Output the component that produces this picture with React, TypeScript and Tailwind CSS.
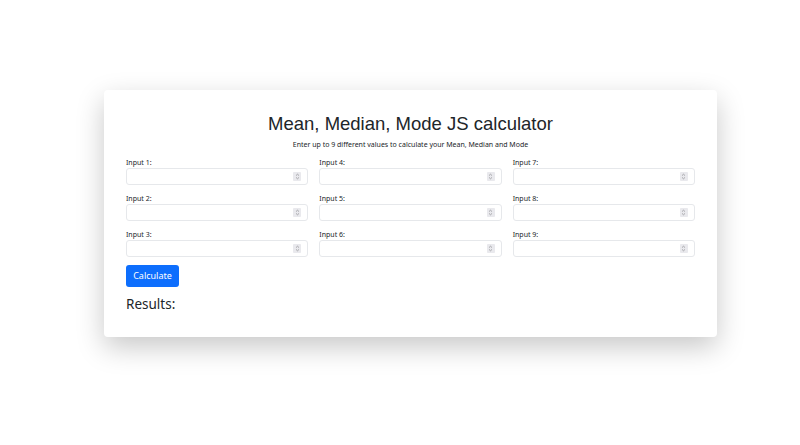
const inputs = [1, 2, 3, 4, 5, 6, 7, 8, 9]

function Spinner() {
  return (
    <span className="flex h-[9px] w-[8px] flex-col items-center justify-center rounded-[1px] bg-[#e9e9ed]">
      <svg width="5" height="7" viewBox="0 0 5 7" fill="none" stroke="#8a8a8e" strokeWidth="0.7">
        <path d="M1 2.6 L2.5 1.2 L4 2.6" />
        <path d="M1 4.4 L2.5 5.8 L4 4.4" />
      </svg>
    </span>
  )
}

function Field({ n }: { n: number }) {
  return (
    <div className="flex flex-col">
      <label className="h-[11px] text-[7px] leading-[11px] text-[#212529]">Input {n}:</label>
      <div className="flex h-[17px] items-center justify-end rounded-[3px] border border-[#e6e8eb] bg-white pr-[6px]">
        <Spinner />
      </div>
    </div>
  )
}

export default function App() {
  return (
    <main className="min-h-[445px] bg-white pl-[104px] pt-[90px]" style={{ fontFamily: '"Noto Sans", "Open Sans", sans-serif' }}>
      <div className="w-[613px] rounded-[4px] bg-white px-[22px] pb-[24px] pt-[22px] shadow-[0_10px_28px_rgba(0,0,0,0.22)]">
        <h1 className="text-center font-['Liberation_Sans',Arial,sans-serif] text-[18.5px] leading-[24px] text-[#212529]">
          Mean, Median, Mode JS calculator
        </h1>
        <p className="mt-[4px] text-center text-[7px] leading-[10px] text-[#212529]">
          Enter up to 9 different values to calculate your Mean, Median and Mode
        </p>

        <div className="mt-[7px] grid grid-flow-col grid-cols-3 grid-rows-3 gap-x-[11px] gap-y-[8px]">
          {inputs.map(n => <Field key={n} n={n} />)}
        </div>

        <button type="button" className="mt-[8px] h-[22px] w-[53px] rounded-[3px] bg-[#0d6efd] text-[9px] text-white">
          Calculate
        </button>

        <h2 className="mt-[8px] text-[13.5px] leading-[18px] text-[#212529]">Results:</h2>
      </div>
    </main>
  )
}
